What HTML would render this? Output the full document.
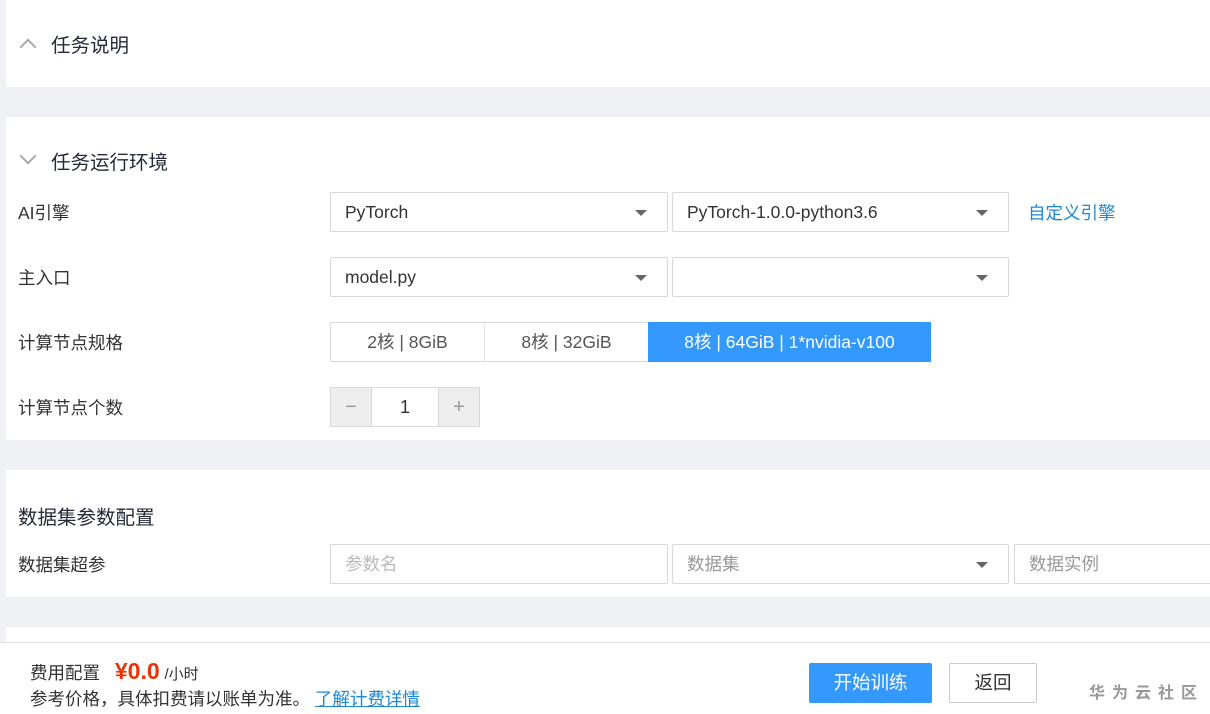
<!DOCTYPE html>
<html><head><meta charset="utf-8"><style>
*{box-sizing:border-box;margin:0;padding:0}
body{width:1210px;height:714px;overflow:hidden;background:#f0f1f5;font-family:"Liberation Sans","Noto Sans CJK SC",sans-serif;color:#333;position:relative}
.p{position:absolute;left:6px;right:0;background:#fff}
.a{position:absolute}
.t{font-size:19.5px;color:#252b3a}
.l{font-size:17.5px;color:#333;position:absolute;left:18px}
.sel{position:absolute;height:40px;border:1px solid #d9d9d9;border-radius:2px;background:#fff;font-size:17.5px;padding:0 14px;line-height:38px;color:#333}
.arr:after{content:"";position:absolute;right:20px;top:17px;border:6px solid transparent;border-top:6px solid #666;border-bottom:0}
.chev{position:absolute;width:12px;height:12px;border-left:2.5px solid #aaa;border-top:2.5px solid #aaa}
</style></head><body>
<div class="p" style="top:0;height:87px">
 <div class="chev" style="left:16px;top:41px;transform:rotate(45deg)"></div>
 <div class="a t" style="left:45px;top:29px">任务说明</div>
</div>
<div class="p" style="top:117px;height:323px">
 <div class="chev" style="left:16px;top:33px;transform:rotate(225deg)"></div>
 <div class="a t" style="left:45px;top:29px">任务运行环境</div>
 <div class="l" style="left:12px;top:83px">AI引擎</div>
 <div class="sel arr" style="left:324px;top:75px;width:338px">PyTorch</div>
 <div class="sel arr" style="left:666px;top:75px;width:337px">PyTorch-1.0.0-python3.6</div>
 <div class="a" style="left:1022px;top:83px;font-size:17.5px;color:#1e88d8">自定义引擎</div>
 <div class="l" style="left:12px;top:148px">主入口</div>
 <div class="sel arr" style="left:324px;top:140px;width:338px">model.py</div>
 <div class="sel arr" style="left:666px;top:140px;width:337px"></div>
 <div class="l" style="left:12px;top:213px">计算节点规格</div>
 <div class="a" style="left:324px;top:205px;width:601px;height:40px;border:1px solid #d9d9d9;border-radius:2px;font-size:17.5px;line-height:38px;text-align:center;display:flex">
  <div style="width:154px;border-right:1px solid #e5e5e5;color:#555">2核 | 8GiB</div>
  <div style="width:163px;color:#555">8核 | 32GiB</div>
  <div style="flex:1;background:#3399ff;color:#fff;margin:-1px -1px -1px 0;line-height:40px">8核 | 64GiB | 1*nvidia-v100</div>
 </div>
 <div class="l" style="left:12px;top:278px">计算节点个数</div>
 <div class="a" style="left:324px;top:270px;width:150px;height:40px;border:1px solid #d9d9d9;display:flex;font-size:20px;line-height:38px;text-align:center">
  <div style="width:41px;background:#eee;border-right:1px solid #d9d9d9;color:#999">−</div>
  <div style="flex:1;color:#333;font-size:18px">1</div>
  <div style="width:41px;background:#eee;border-left:1px solid #d9d9d9;color:#999">+</div>
 </div>
</div>
<div class="p" style="top:470px;height:127px">
 <div class="a t" style="left:12px;top:31px">数据集参数配置</div>
 <div class="l" style="left:12px;top:82px">数据集超参</div>
 <div class="sel" style="left:324px;top:74px;width:338px;color:#bbb">参数名</div>
 <div class="sel arr" style="left:666px;top:74px;width:337px;color:#999">数据集</div>
 <div class="sel" style="left:1008px;top:74px;width:210px;color:#999">数据实例</div>
</div>
<div class="p" style="top:627px;height:20px"></div>
<div class="a" style="left:0;right:0;top:642px;height:72px;background:#fff;border-top:1px solid #e3e3e3">
 <div class="a" style="left:30px;top:15px;font-size:17.5px;color:#333">费用配置 <span style="color:#e30;font-size:23px;font-weight:bold;margin-left:10px">¥0.0</span> <span style="font-size:15px">/小时</span></div>
 <div class="a" style="left:30px;top:43px;font-size:17.5px;color:#333">参考价格，具体扣费请以账单为准。 <span style="color:#1e88d8;text-decoration:underline">了解计费详情</span></div>
 <div class="a" style="left:809px;top:20px;width:123px;height:40px;background:#3399ff;color:#fff;font-size:18.5px;line-height:40px;text-align:center;border-radius:2px">开始训练</div>
 <div class="a" style="left:949px;top:20px;width:88px;height:40px;border:1px solid #ccc;font-size:18.5px;line-height:38px;text-align:center;border-radius:2px">返回</div>
 <div class="a" style="left:1089px;top:36px;font-size:16px;color:#999;letter-spacing:7px;font-weight:bold">华为云社区</div>
</div>
</body></html>
